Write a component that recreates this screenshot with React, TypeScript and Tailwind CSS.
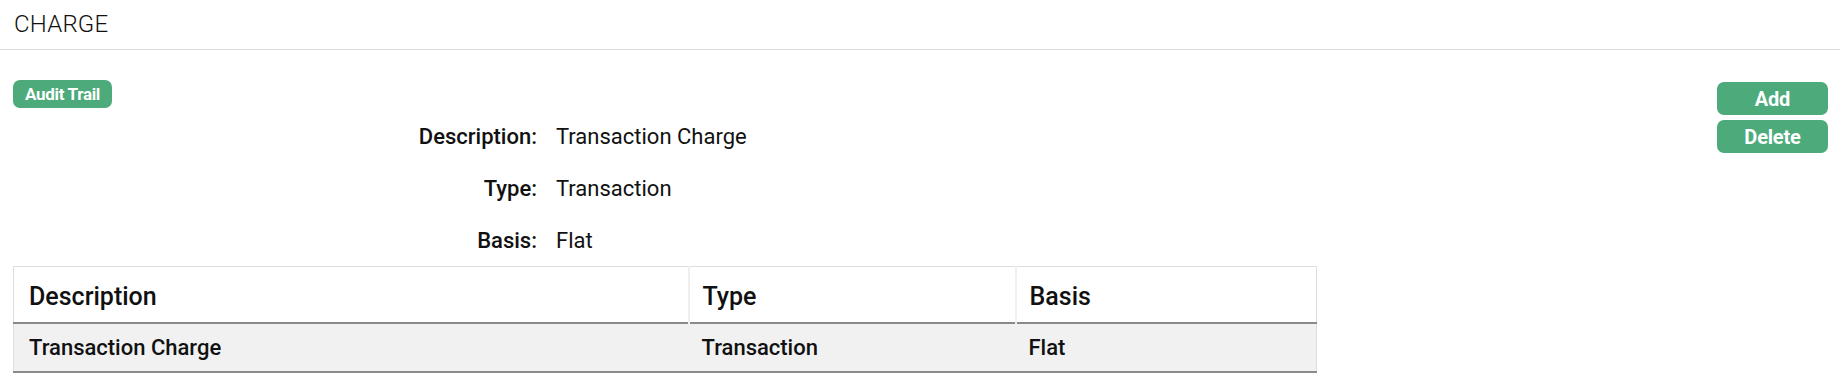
import React from "react";

const rows = [
  { label: "Description", value: "Transaction Charge" },
  { label: "Type", value: "Transaction" },
  { label: "Basis", value: "Flat" },
];

const charges = [{ description: "Transaction Charge", type: "Transaction", basis: "Flat" }];

function GreenButton({ children, className = "" }: { children: React.ReactNode; className?: string }) {
  return (
    <button
      className={`bg-[#4caa7b] text-white font-bold rounded-[7px] flex items-center justify-center leading-none ${className}`}
    >
      {children}
    </button>
  );
}

export default function App() {
  return (
    <div className="w-[1840px] h-[388px] bg-white text-[#111] font-['Roboto',sans-serif] overflow-hidden">
      {/* Title */}
      <div className="h-[50px] border-b border-[#dcdcdc] px-[14px] flex items-center">
        <h1 className="text-[24px] font-light tracking-[0.2px] pb-[2px]">CHARGE</h1>
      </div>

      <div className="flex justify-between pl-[13px] pr-[12px] pt-[30px]">
        <div className="w-[1304px]">
          <GreenButton className="w-[99px] h-[28px] text-[17px] tracking-[-0.3px]">Audit Trail</GreenButton>

          {/* Details */}
          <div className="mt-[2px]">
            {rows.map((r) => (
              <div key={r.label} className="h-[52px] flex items-center text-[22px]">
                <div className="w-[524px] text-right font-medium">{r.label}:</div>
                <div className="pl-[19px]">{r.value}</div>
              </div>
            ))}
          </div>

          {/* Table */}
          <table className="w-full border border-[#dedede] border-collapse">
            <thead>
              <tr className="h-[56px] border-b-2 border-[#8a8a8a] text-[25px]">
                <th className="w-[675px] text-left font-medium px-[15px] pt-[5px] border-r-2 border-[#efefef]">Description</th>
                <th className="w-[327px] text-left font-medium px-[13px] pt-[5px] border-r-2 border-[#efefef]">Type</th>
                <th className="text-left font-medium px-[13px] pt-[5px]">Basis</th>
              </tr>
            </thead>
            <tbody>
              {charges.map((c) => (
                <tr key={c.description} className="h-[49px] bg-[#f1f1f1] border-b-2 border-[#8a8a8a] text-[22px] font-medium">
                  <td className="px-[15px] pt-[1px]">{c.description}</td>
                  <td className="px-[13px] pt-[1px]">{c.type}</td>
                  <td className="px-[13px] pt-[1px]">{c.basis}</td>
                </tr>
              ))}
            </tbody>
          </table>
        </div>

        {/* Actions */}
        <div className="w-[111px] flex flex-col gap-[5px] pt-[2px]">
          <GreenButton className="h-[33px] text-[20px] tracking-[-0.2px]">Add</GreenButton>
          <GreenButton className="h-[33px] text-[20px] tracking-[-0.2px]">Delete</GreenButton>
        </div>
      </div>
    </div>
  );
}
